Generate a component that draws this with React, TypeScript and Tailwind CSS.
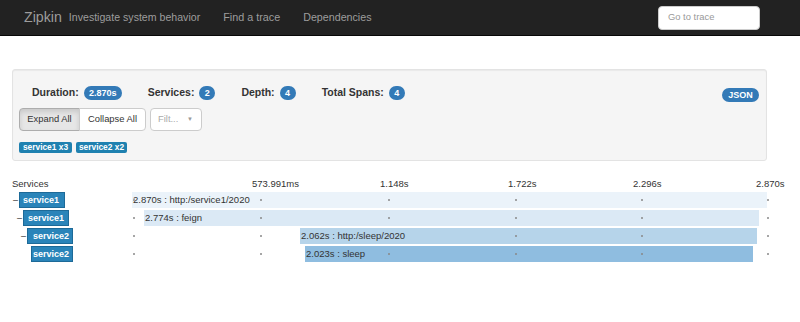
import React from "react";

const TICKS = [1, 128, 256, 383, 509, 635];

type Row = {
  name: string;
  level: number;
  dash: boolean;
  boxW: number;
  boxPl: number;
  left: number;
  width: number;
  color: string;
  text: string;
};

const ROWS: Row[] = [
  { name: "service1", level: 0, dash: true, boxW: 46, boxPl: 3, left: 0, width: 635, color: "#ebf3fa", text: "2.870s : http:/service1/2020" },
  { name: "service1", level: 1, dash: true, boxW: 46, boxPl: 4, left: 12, width: 615, color: "#dbe9f5", text: "2.774s : feign" },
  { name: "service2", level: 2, dash: true, boxW: 46, boxPl: 5, left: 168, width: 457, color: "#b6d4ea", text: "2.062s : http:/sleep/2020" },
  { name: "service2", level: 3, dash: false, boxW: 42, boxPl: 1, left: 173, width: 448, color: "#8fbde0", text: "2.023s : sleep" },
];

function Badge({ children, w }: { children: React.ReactNode; w: number }) {
  return (
    <span
      className="inline-flex h-[14px] items-center justify-center rounded-full bg-[#337ab7] text-[9px] font-bold leading-none text-white"
      style={{ width: w }}
    >
      {children}
    </span>
  );
}

function Stat({ label, value, w }: { label: string; value: string; w: number }) {
  return (
    <div className="flex items-center gap-[5px]">
      <span className="text-[10.5px] font-bold text-[#333]">{label}</span>
      <Badge w={w}>{value}</Badge>
    </div>
  );
}

export default function App() {
  return (
    <div className="min-h-[322px] w-[800px] bg-white font-['Liberation_Sans',Arial,sans-serif] text-[#333]">
      {/* Navbar */}
      <div className="flex h-[36px] items-center border-b border-[#080808] bg-[#222] pl-[24px] pr-[40px]">
        <span className="text-[14.2px] text-[#9d9d9d]">Zipkin</span>
        <span className="ml-[7px] text-[10.6px] text-[#9d9d9d]">Investigate system behavior</span>
        <span className="ml-[23px] text-[10.8px] text-[#9d9d9d]">Find a trace</span>
        <span className="ml-[23px] text-[10.7px] text-[#9d9d9d]">Dependencies</span>
        <div className="ml-auto flex h-[24px] w-[102px] items-center rounded-[4px] border border-[#ccc] bg-white pl-[9px] text-[9.4px] text-[#999]">
          Go to trace
        </div>
      </div>

      {/* Summary panel */}
      <div className="ml-[12px] mt-[33px] w-[755px] rounded-[3px] border border-[#e3e3e3] bg-[#f5f5f5] pb-[7px] pl-[6px] pr-[7px] pt-[16px] shadow-[inset_0_1px_1px_rgba(0,0,0,0.05)]">
        <div className="flex h-[14px] items-center pl-[13px]">
          <div className="flex items-center gap-[26px]">
            <Stat label="Duration:" value="2.870s" w={38} />
            <Stat label="Services:" value="2" w={16} />
            <Stat label="Depth:" value="4" w={16} />
            <Stat label="Total Spans:" value="4" w={16} />
          </div>
          <div className="ml-auto -mt-[1px]">
            <Badge w={37}>JSON</Badge>
          </div>
        </div>

        <div className="mt-[8px] flex h-[23px] items-stretch">
          <div className="flex items-stretch">
            <div className="flex w-[61px] items-center justify-center rounded-l-[4px] border border-[#adadad] bg-[#e6e6e6] text-[9.4px] text-[#333] shadow-[inset_0_3px_5px_rgba(0,0,0,0.125)]">
              Expand All
            </div>
            <div className="-ml-px flex w-[67px] items-center justify-center rounded-r-[4px] border border-[#ccc] bg-white text-[9.4px] text-[#333]">
              Collapse All
            </div>
          </div>
          <div className="ml-[4px] flex w-[52px] items-center justify-between rounded-[4px] border border-[#ccc] bg-white pl-[7px] pr-[8px] text-[9.4px] text-[#aaa]">
            <span>Filt...</span>
            <span className="text-[6px] text-[#999]">▼</span>
          </div>
        </div>

        <div className="mt-[11px] flex h-[11px] items-center gap-[4px]">
          <span className="flex h-[11px] w-[53px] items-center justify-center rounded-[2px] bg-[#1f81b0] text-[8.4px] font-bold leading-none text-white">
            service1 x3
          </span>
          <span className="flex h-[11px] w-[51px] items-center justify-center rounded-[2px] bg-[#1f81b0] text-[8.4px] font-bold leading-none text-white">
            service2 x2
          </span>
        </div>
      </div>

      {/* Trace timeline */}
      <div className="ml-[12px] mt-[16px] w-[775px]">
        <div className="flex h-[14px] items-center text-[9.5px] text-[#333]">
          <div className="w-[120px]">Services</div>
          <div className="w-[120px]" />
          <div className="w-[128px]">573.991ms</div>
          <div className="w-[128px]">1.148s</div>
          <div className="w-[125px]">1.722s</div>
          <div className="w-[123px]">2.296s</div>
          <div>2.870s</div>
        </div>

        <div className="mt-[1px] flex flex-col gap-[2px]">
          {ROWS.map((r, i) => (
            <div key={i} className="flex h-[16px] items-stretch">
              <div className="flex w-[120px] items-center" style={{ paddingLeft: r.level * 4 }}>
                <span className="w-[7px] pl-[1px] text-[9px] leading-none text-[#333]">{r.dash ? "–" : ""}</span>
                <span
                  className="flex h-[16px] items-center border border-[#1d6a98] bg-[#2a84b9] text-[9px] font-bold leading-none text-white"
                  style={{ width: r.boxW, paddingLeft: r.boxPl }}
                >
                  {r.name}
                </span>
              </div>
              <div className="relative w-[635px]">
                <div
                  className="relative z-0 flex h-[16px] items-center"
                  style={{ marginLeft: r.left, width: r.width, backgroundColor: r.color }}
                >
                  <span
                    className="relative z-10 pl-[1px] pr-[2px] text-[9.5px] leading-none text-[#333]"
                    style={{ backgroundColor: r.color }}
                  >
                    {r.text}
                  </span>
                </div>
                {TICKS.map((t) => (
                  <span
                    key={t}
                    className="absolute top-[7px] z-[5] h-[1.5px] w-[1.5px] rounded-full bg-[#888]"
                    style={{ left: t }}
                  />
                ))}
              </div>
            </div>
          ))}
        </div>
      </div>
    </div>
  );
}
